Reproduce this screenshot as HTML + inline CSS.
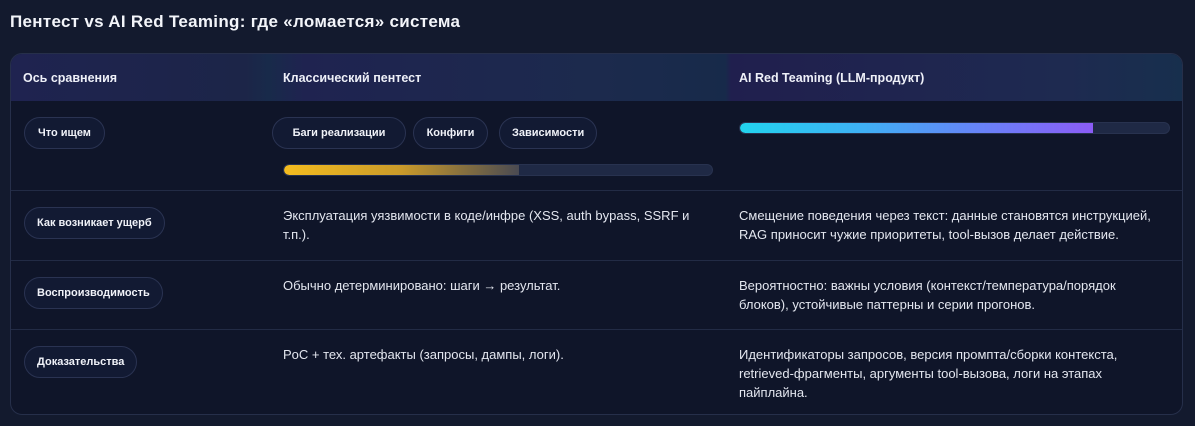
<!DOCTYPE html>
<html><head><meta charset="utf-8"><style>
*{box-sizing:border-box;margin:0;padding:0}
body{width:1195px;height:426px;background:#131a2e;font-family:"Liberation Sans","DejaVu Sans",sans-serif;color:#e6e9f2;position:relative;overflow:hidden}
h1{position:absolute;left:10px;top:12px;font-size:17px;font-weight:bold;color:#f3f5fa;letter-spacing:0.3px}
.t{position:absolute;left:10px;top:53px;width:1173px;height:362px;border:1px solid #262f4a;border-radius:12px;background:#0f1529;overflow:hidden}
.hd{position:absolute;left:0;top:0;width:100%;height:47px;background:linear-gradient(90deg,#1f2350 0%,#1c2548 20%,#182a4a 22%,#1f2350 25%,#1c2a4d 50%,#172a4a 61%,#201f4e 61.5%,#1e2a50 90%,#172f4d 100%)}
.hc{position:absolute;top:17px;font-size:12.5px;font-weight:bold;color:#eef0f8}
.row{position:absolute;left:0;width:100%;border-top:1px solid #222b45}
.chip{position:absolute;height:32px;border:1px solid #2a3352;border-radius:16px;background:#121a33;font-size:11px;font-weight:bold;line-height:31px;padding:0 12px;color:#f0f2f8;white-space:nowrap;text-align:center}
.tx{position:absolute;font-size:13px;line-height:19px;color:#e3e6ef}
.bar{position:absolute;height:12px;border-radius:6px;background:#1f2945;border:1px solid #28324f;overflow:hidden}
.fill{height:100%;border-radius:6px 0 0 6px}
</style></head><body>
<h1>Пентест vs AI Red Teaming: где «ломается» система</h1>
<div class="t">
<div class="hd"></div>
<div class="hc" style="left:12px">Ось сравнения</div>
<div class="hc" style="left:272px">Классический пентест</div>
<div class="hc" style="left:728px">AI Red Teaming (LLM-продукт)</div>

<div class="row" style="top:47px;height:90px;border-top:none">
<div class="chip" style="left:13px;top:16px;width:81px">Что ищем</div>
<div class="chip" style="left:261px;top:16px;width:134px">Баги реализации</div>
<div class="chip" style="left:402px;top:16px;width:75px">Конфиги</div>
<div class="chip" style="left:488px;top:16px;width:98px">Зависимости</div>
<div class="bar" style="left:272px;top:63px;width:430px"><div class="fill" style="width:235px;background:linear-gradient(90deg,#f4bc1f,#c99a2a 50%,#4a4a52)"></div></div>
<div class="bar" style="left:728px;top:21px;width:431px"><div class="fill" style="width:353px;background:linear-gradient(90deg,#22d3ee,#3fb0f5 35%,#6a80f8 70%,#8b5cf6)"></div></div>
</div>

<div class="row" style="top:136px;height:70px">
<div class="chip" style="left:13px;top:16px">Как возникает ущерб</div>
<div class="tx" style="left:272px;top:15px;width:420px">Эксплуатация уязвимости в коде/инфре (XSS, auth bypass, SSRF и т.п.).</div>
<div class="tx" style="left:728px;top:15px;width:435px">Смещение поведения через текст: данные становятся инструкцией, RAG приносит чужие приоритеты, tool-вызов делает действие.</div>
</div>

<div class="row" style="top:206px;height:69px">
<div class="chip" style="left:13px;top:16px">Воспроизводимость</div>
<div class="tx" style="left:272px;top:15px;width:420px">Обычно детерминировано: шаги → результат.</div>
<div class="tx" style="left:728px;top:15px;width:410px">Вероятностно: важны условия (контекст/температура/порядок блоков), устойчивые паттерны и серии прогонов.</div>
</div>

<div class="row" style="top:275px;height:87px">
<div class="chip" style="left:13px;top:16px">Доказательства</div>
<div class="tx" style="left:272px;top:15px;width:420px">PoC + тех. артефакты (запросы, дампы, логи).</div>
<div class="tx" style="left:728px;top:15px;width:420px">Идентификаторы запросов, версия промпта/сборки контекста, retrieved-фрагменты, аргументы tool-вызова, логи на этапах пайплайна.</div>
</div>
</div>
</body></html>
